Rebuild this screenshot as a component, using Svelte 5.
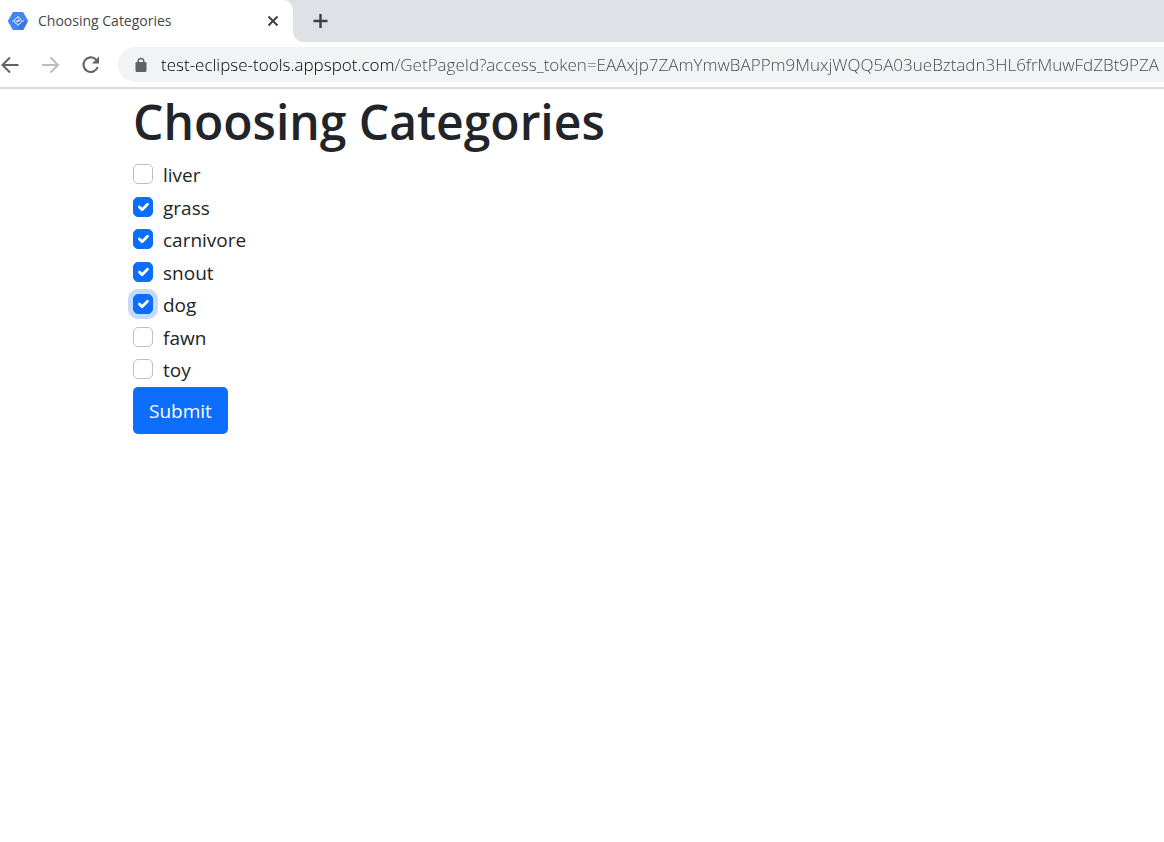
<script>
  let categories = $state([
    { name: 'liver', checked: false },
    { name: 'grass', checked: true },
    { name: 'carnivore', checked: true },
    { name: 'snout', checked: true },
    { name: 'dog', checked: true },
    { name: 'fawn', checked: false },
    { name: 'toy', checked: false }
  ]);
  let active = $state('dog');
  let address = $state(
    'test-eclipse-tools.appspot.com/GetPageId?access_token=EAAxjp7ZAmYmwBAPPm9MuxjWQQ5A03ueBztadn3HL6frMuwFdZBt9PZA'
  );
</script>

<div class="browser">
  <div class="tabs">
    <div class="tab">
      <svg class="favicon" width="20" height="18" viewBox="0 0 20 18" aria-hidden="true">
        <path d="M5.6 0h8.8q.7 0 1 .6l4.4 7.7q.4.7 0 1.4l-4.4 7.7q-.3.6-1 .6H5.6q-.7 0-1-.6L.2 9.700q-.4-.7 0-1.400L4.600.6q.3-.6 1-.6z" fill="#4285f4" />
        <path d="M13 6 19 11l-3.600 6.400q-.3.6-1 .6H12L7 12z" fill="#3b77db" />
        <g fill="none" stroke="#dce8fd">
          <circle cx="10" cy="9" r="3.400" stroke-width="1" />
          <path d="M10 4v1.800M10 12.200V14M4 9h2.500M13.500 9H16" stroke-width="1.100" />
          <path d="M8.400 10l3.200-2" stroke-width="1.600" />
        </g>
      </svg>
      <span class="title">Choosing Categories</span>
      <button class="icon close" aria-label="Close tab">
        <svg width="12" height="12" viewBox="0 0 12 12"><path d="M1.500 1.500l9 9M10.500 1.500l-9 9" stroke="#3c4043" stroke-width="1.900" /></svg>
      </button>
    </div>
    <div class="strip">
      <button class="icon" aria-label="New tab">
        <svg width="16" height="16" viewBox="0 0 16 16"><path d="M7.500 1v14M.5 8h14" stroke="#3c4043" stroke-width="2.400" /></svg>
      </button>
    </div>
  </div>

  <div class="toolbar">
    <div class="nav">
      <button class="icon" aria-label="Back">
        <svg width="20" height="20" viewBox="0 0 20 20" fill="none" stroke="#5f6368" stroke-width="2"><path d="M18.500 10H3M10 2.500 2.500 10l7.500 7.500" /></svg>
      </button>
      <button class="icon" aria-label="Forward" disabled>
        <svg width="20" height="20" viewBox="0 0 20 20" fill="none" stroke="#babcbe" stroke-width="2"><path d="M2 10h15.500M10.500 2.500 18 10l-7.500 7.500" /></svg>
      </button>
      <button class="icon" aria-label="Reload">
        <svg width="20" height="20" viewBox="0 0 20 20">
          <path d="M16.100 4.600A7.300 7.300 0 1 0 17.700 12" fill="none" stroke="#5f6368" stroke-width="2.100" />
          <path d="M19 1.500v7h-7z" fill="#5f6368" />
        </svg>
      </button>
    </div>
    <div class="omnibox">
      <svg class="lock" width="12" height="16" viewBox="0 0 12 16" aria-hidden="true">
        <rect x="0.500" y="5" width="11" height="10" rx="1.300" fill="#5f6368" />
        <path d="M3.200 6V4.200a2.800 2.800 0 0 1 5.600 0V6" fill="none" stroke="#5f6368" stroke-width="1.500" />
      </svg>
      <input type="text" aria-label="Address" spellcheck="false" bind:value={address} />
    </div>
  </div>
</div>

<main>
  <h1>Choosing Categories</h1>
  <form onsubmit={(e) => e.preventDefault()}>
    <div class="options">
      {#each categories as category (category.name)}
        <label>
          <input
            type="checkbox"
            class:active={active === category.name}
            bind:checked={category.checked}
            onfocus={() => (active = category.name)}
          />
          <span>{category.name}</span>
        </label>
      {/each}
    </div>
    <button class="submit" type="submit">Submit</button>
  </form>
</main>

<style>
  :global(body) {
    background: #fff;
    color: #212529;
    font-family: 'Segoe UI', 'Open Sans', 'Noto Sans', sans-serif;
  }
  .browser {
    border-bottom: 2px solid #dadce0;
  }
  .tabs {
    display: flex;
    height: 42px;
    background: linear-gradient(#dee1e6 50%, #fff 50%);
  }
  .tab {
    display: flex;
    align-items: center;
    box-sizing: border-box;
    width: 293px;
    padding: 0 12px 0 8px;
    background: #fff;
    border-top-right-radius: 10px;
  }
  .title {
    flex: 1;
    margin-left: 10px;
    font-size: 14px;
    line-height: 20px;
    color: #45494d;
    white-space: nowrap;
  }
  .strip {
    flex: 1;
    display: flex;
    align-items: center;
    padding-left: 20px;
    background: #dee1e6;
    border-bottom-left-radius: 10px;
  }
  .icon {
    display: grid;
    place-items: center;
    padding: 0;
    border: 0;
    background: none;
  }
  .close {
    width: 16px;
    height: 16px;
  }
  .toolbar {
    display: flex;
    align-items: center;
    gap: 18px;
    height: 45px;
  }
  .nav {
    display: flex;
    gap: 20px;
  }
  .omnibox {
    flex: 1;
    min-width: 0;
    display: flex;
    align-items: center;
    gap: 14px;
    height: 35px;
    padding-left: 17px;
    background: #f1f3f4;
    border-radius: 18px 0 0 18px;
  }
  .lock {
    flex: none;
  }
  .omnibox input {
    flex: 1;
    min-width: 0;
    height: 30px;
    padding: 0;
    border: 0;
    outline: 0;
    font: 300 17px/30px 'Segoe UI', 'Open Sans', 'Noto Sans', sans-serif;
    color: transparent;
    caret-color: #202124;
    background: linear-gradient(to right, #000 233px, #404448 233px);
    background-clip: text;
  }
  main {
    padding: 0 133px;
  }
  h1 {
    margin: 0;
    padding-bottom: 4px;
    font-size: 48px;
    line-height: 66px;
    font-weight: 600;
  }
  .options {
    display: grid;
    grid-auto-rows: 1fr;
    height: 228px;
  }
  label {
    display: flex;
    align-items: flex-start;
    gap: 10px;
    width: fit-content;
    font-size: 19px;
    line-height: 32px;
  }
  label input {
    appearance: none;
    box-sizing: border-box;
    width: 20px;
    height: 20px;
    margin: 5px 0 0;
    border: 1px solid #bfbfbf;
    border-radius: 5px;
    background: #fff;
    outline: 0;
  }
  label input:checked {
    border-color: #0d6efd;
    background: #0d6efd
      url("data:image/svg+xml,%3csvg xmlns='http://www.w3.org/2000/svg' viewBox='0 0 20 20'%3e%3cpath fill='none' stroke='%23fff' stroke-linecap='round' stroke-linejoin='round' stroke-width='3' d='M6 10l3 3l6-6'/%3e%3c/svg%3e")
      center / contain no-repeat;
  }
  label input.active {
    box-shadow: 0 0 0 5px #c2dbfe;
  }
  .submit {
    display: block;
    height: 47px;
    padding: 0 16px;
    border: 0;
    border-radius: 5px;
    background: #0d6efd;
    color: #fff;
    font: 19px/30px 'Segoe UI', 'Open Sans', 'Noto Sans', sans-serif;
  }
</style>
